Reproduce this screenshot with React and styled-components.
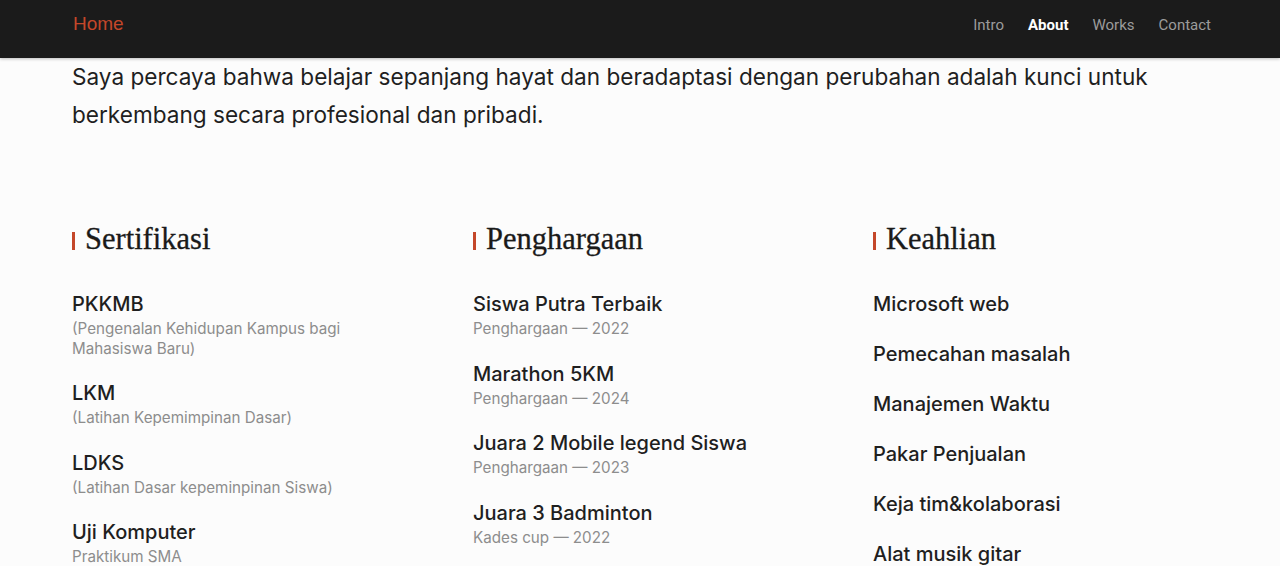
import React from "react";
import styled, { createGlobalStyle } from "styled-components";

const Global = createGlobalStyle`
  html, body { margin: 0; padding: 0; }
  body {
    background: #fcfcfc;
    font-family: "Inter", "Noto Sans", sans-serif;
    color: #1f1f1f;
    overflow: hidden;
  }
`;

const Nav = styled.nav`
  height: 58px;
  background: #1b1b1b;
  display: flex;
  align-items: center;
  justify-content: space-between;
  padding: 0 69px 0 73px;
  box-shadow: 0 1px 3px rgba(0, 0, 0, 0.25);
  position: relative;
  z-index: 2;
`;

const Brand = styled.a`
  font-family: "Liberation Sans", Arial, sans-serif;
  font-size: 19px;
  color: #c4472a;
  text-decoration: none;
  margin-top: -10px;
`;

const Links = styled.div`
  display: flex;
  gap: 24px;
  margin-top: -8px;
`;

const NavLink = styled.a`
  font-family: "Roboto", sans-serif;
  font-size: 15px;
  font-weight: ${(p) => (p.$active ? 700 : 400)};
  color: ${(p) => (p.$active ? "#ffffff" : "#9b9b9b")};
  text-decoration: none;
`;

const Container = styled.main`
  width: 1136px;
  margin: 0 auto;
`;

const Lead = styled.p`
  margin: 0;
  font-size: 22.6px;
  line-height: 38px;
  color: #1f1f1f;
`;

const Grid = styled.div`
  display: grid;
  grid-template-columns: 401px 400px 1fr;
  margin-top: 87px;
`;

const Column = styled.section`
  display: flex;
  flex-direction: column;
`;

const Heading = styled.h2`
  margin: 0 0 34px;
  display: flex;
  align-items: center;
  gap: 10px;
  font-family: "Liberation Serif", "DejaVu Serif", serif;
  font-weight: 400;
  font-size: 30.5px;
  line-height: 36px;
  color: #1a1a1a;
  -webkit-text-stroke: 0.3px #1a1a1a;

  &::before {
    content: "";
    width: 3px;
    height: 18px;
    background: #c4472a;
    margin-top: 4px;
  }
`;

const List = styled.ul`
  list-style: none;
  margin: 0;
  padding: 0;
  display: flex;
  flex-direction: column;
  gap: ${(p) => p.$gap}px;
`;

const Item = styled.li`
  display: flex;
  flex-direction: column;
  gap: 2px;
  max-width: 290px;
`;

const Title = styled.span`
  font-size: 20px;
  line-height: 26px;
  font-weight: 500;
  color: #1f1f1f;
`;

const Sub = styled.span`
  font-size: 15.2px;
  line-height: 19.5px;
  color: #8d8d8d;
`;

const sertifikasi = [
  ["PKKMB", "(Pengenalan Kehidupan Kampus bagi Mahasiswa Baru)"],
  ["LKM", "(Latihan Kepemimpinan Dasar)"],
  ["LDKS", "(Latihan Dasar kepeminpinan Siswa)"],
  ["Uji Komputer", "Praktikum SMA"],
];

const penghargaan = [
  ["Siswa Putra Terbaik", "Penghargaan — 2022"],
  ["Marathon 5KM", "Penghargaan — 2024"],
  ["Juara 2 Mobile legend Siswa", "Penghargaan — 2023"],
  ["Juara 3 Badminton", "Kades cup — 2022"],
];

const keahlian = [
  "Microsoft web",
  "Pemecahan masalah",
  "Manajemen Waktu",
  "Pakar Penjualan",
  "Keja tim&kolaborasi",
  "Alat musik gitar",
];

export default function App() {
  return (
    <>
      <Global />
      <Nav>
        <Brand href="#">Home</Brand>
        <Links>
          <NavLink href="#">Intro</NavLink>
          <NavLink href="#" $active>About</NavLink>
          <NavLink href="#">Works</NavLink>
          <NavLink href="#">Contact</NavLink>
        </Links>
      </Nav>
      <Container>
        <Lead>
          Saya percaya bahwa belajar sepanjang hayat dan beradaptasi dengan perubahan adalah kunci untuk
          berkembang secara profesional dan pribadi.
        </Lead>
        <Grid>
          <Column>
            <Heading>Sertifikasi</Heading>
            <List $gap={22}>
              {sertifikasi.map(([t, s]) => (
                <Item key={t}>
                  <Title>{t}</Title>
                  <Sub>{s}</Sub>
                </Item>
              ))}
            </List>
          </Column>
          <Column>
            <Heading>Penghargaan</Heading>
            <List $gap={22}>
              {penghargaan.map(([t, s]) => (
                <Item key={t}>
                  <Title>{t}</Title>
                  <Sub>{s}</Sub>
                </Item>
              ))}
            </List>
          </Column>
          <Column>
            <Heading>Keahlian</Heading>
            <List $gap={24}>
              {keahlian.map((t) => (
                <Item key={t}>
                  <Title>{t}</Title>
                </Item>
              ))}
            </List>
          </Column>
        </Grid>
      </Container>
    </>
  );
}
